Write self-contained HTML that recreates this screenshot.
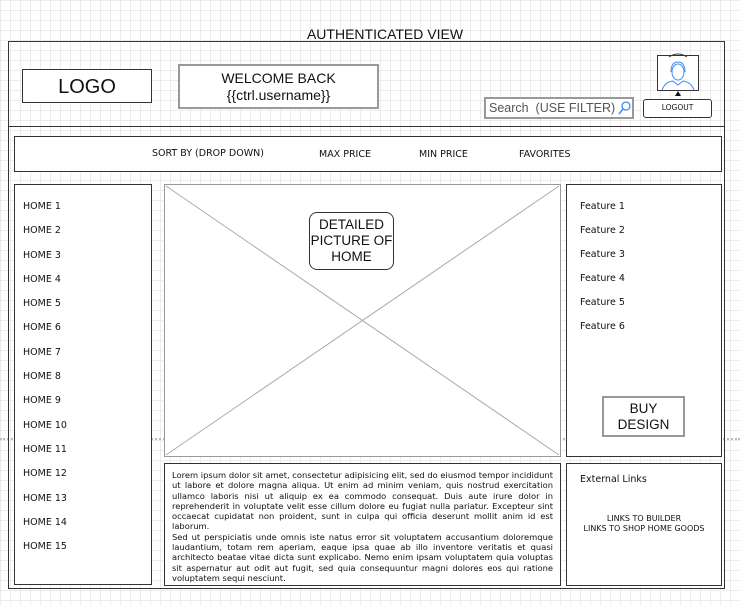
<!DOCTYPE html>
<html><head><meta charset="utf-8"><style>
*{margin:0;padding:0;box-sizing:border-box}
body{width:740px;height:605px;overflow:hidden;position:relative;background:#fff;
background-image:linear-gradient(#ececec 1px,transparent 1px),linear-gradient(90deg,#ececec 1px,transparent 1px);
background-size:10px 10px;font-family:"DejaVu Sans",Verdana,sans-serif;color:#111}
.a{position:absolute}
.b{position:absolute;border:1.5px solid #333;background:#fff}
.g{position:absolute;border:2px solid #999;background:#fff}
.t{position:absolute;font-size:9.5px;white-space:nowrap}
.ls{font-family:"Liberation Sans",Arial,sans-serif}
</style></head><body>
<div class="a ls" style="left:0;width:770px;top:26px;text-align:center;font-size:14px">AUTHENTICATED VIEW</div>
<div class="a" style="left:0;top:438px;width:740px;border-top:2px dotted #bbb"></div>
<div class="b" style="left:8px;top:41px;width:717px;height:548px;background:transparent"></div>
<div class="a" style="left:8px;top:126px;width:717px;border-top:1.5px solid #333"></div>
<div class="b ls" style="left:22px;top:69px;width:130px;height:34px;font-size:20px;text-align:center;line-height:34px">LOGO</div>
<div class="g ls" style="left:178px;top:64px;width:201px;height:45px;font-size:14px;text-align:center;line-height:17px;padding-top:4px">WELCOME BACK<br>{{ctrl.username}}</div>
<div class="g ls" style="left:484px;top:97px;width:150px;height:22px;font-size:12.5px;color:#555;line-height:18px;padding-left:3px">Search&nbsp; (USE FILTER)</div>
<svg class="a" style="left:618px;top:100px" width="14" height="16"><circle cx="8" cy="6" r="4" fill="none" stroke="#3a8ef0" stroke-width="1.3"/><line x1="5" y1="9" x2="1" y2="14" stroke="#3a8ef0" stroke-width="1.5"/></svg>
<div class="a" style="left:657px;top:55px;width:42px;height:36px;border:1px solid #333;background:#fff"></div>
<svg class="a" style="left:657px;top:52px" width="42" height="46"><path d="M12 5 Q21 -1 30 5" fill="none" stroke="#333"/><ellipse cx="21" cy="20" rx="6" ry="8" fill="none" stroke="#3a8ef0"/><path d="M14 20 Q14 10 21 10 Q28 10 28 20" fill="none" stroke="#3a8ef0"/><path d="M5 38 Q8 30 16 29 L21 33 L26 29 Q34 30 37 38" fill="none" stroke="#3a8ef0"/><path d="M21 39 L18 44 L24 44Z" fill="#111"/></svg>
<div class="b" style="left:643px;top:99px;width:69px;height:19px;border-radius:3px;font-size:7.5px;text-align:center;line-height:16px">LOGOUT</div>
<div class="b" style="left:14px;top:136px;width:708px;height:36px"></div>
<div class="t" style="left:152px;top:148px">SORT BY (DROP DOWN)</div>
<div class="t" style="left:319px;top:149px">MAX PRICE</div>
<div class="t" style="left:419px;top:149px">MIN PRICE</div>
<div class="t" style="left:519px;top:149px">FAVORITES</div>
<div class="b" style="left:14px;top:184px;width:138px;height:401px"></div>
<div class="a" style="left:23px;top:195px;font-size:9.5px;line-height:24.3px">HOME 1<br>HOME 2<br>HOME 3<br>HOME 4<br>HOME 5<br>HOME 6<br>HOME 7<br>HOME 8<br>HOME 9<br>HOME 10<br>HOME 11<br>HOME 12<br>HOME 13<br>HOME 14<br>HOME 15</div>
<div class="a" style="left:164px;top:184px;width:397px;height:273px;border:1.5px solid #999;background:#fff"></div>
<svg class="a" style="left:164px;top:184px" width="397" height="273"><line x1="2" y1="2" x2="395" y2="271" stroke="#aaa"/><line x1="395" y1="2" x2="2" y2="271" stroke="#aaa"/></svg>
<div class="b ls" style="left:309px;top:212px;width:85px;height:58px;border-radius:8px;font-size:13.5px;text-align:center;line-height:16px;padding-top:4px">DETAILED<br>PICTURE OF<br>HOME</div>
<div class="b" style="left:566px;top:184px;width:156px;height:273px"></div>
<div class="a" style="left:580px;top:195px;font-size:9.5px;line-height:24px">Feature 1<br>Feature 2<br>Feature 3<br>Feature 4<br>Feature 5<br>Feature 6</div>
<div class="g ls" style="left:602px;top:396px;width:83px;height:41px;font-size:13.5px;text-align:center;line-height:16px;padding-top:3px">BUY<br>DESIGN</div>
<div class="b" style="left:164px;top:463px;width:397px;height:123px;padding:6px 7px 0 7px;font-size:8.35px;line-height:10.3px;text-align:justify">Lorem ipsum dolor sit amet, consectetur adipisicing elit, sed do eiusmod tempor incididunt ut labore et dolore magna aliqua. Ut enim ad minim veniam, quis nostrud exercitation ullamco laboris nisi ut aliquip ex ea commodo consequat. Duis aute irure dolor in reprehenderit in voluptate velit esse cillum dolore eu fugiat nulla pariatur. Excepteur sint occaecat cupidatat non proident, sunt in culpa qui officia deserunt mollit anim id est laborum.<br>Sed ut perspiciatis unde omnis iste natus error sit voluptatem accusantium doloremque laudantium, totam rem aperiam, eaque ipsa quae ab illo inventore veritatis et quasi architecto beatae vitae dicta sunt explicabo. Nemo enim ipsam voluptatem quia voluptas sit aspernatur aut odit aut fugit, sed quia consequuntur magni dolores eos qui ratione voluptatem sequi nesciunt.</div>
<div class="b" style="left:566px;top:463px;width:156px;height:123px"></div>
<div class="t" style="left:580px;top:474px">External Links</div>
<div class="a" style="left:566px;top:514px;width:156px;text-align:center;font-size:8px;line-height:10px">LINKS TO BUILDER<br>LINKS TO SHOP HOME GOODS</div>
</body></html>
